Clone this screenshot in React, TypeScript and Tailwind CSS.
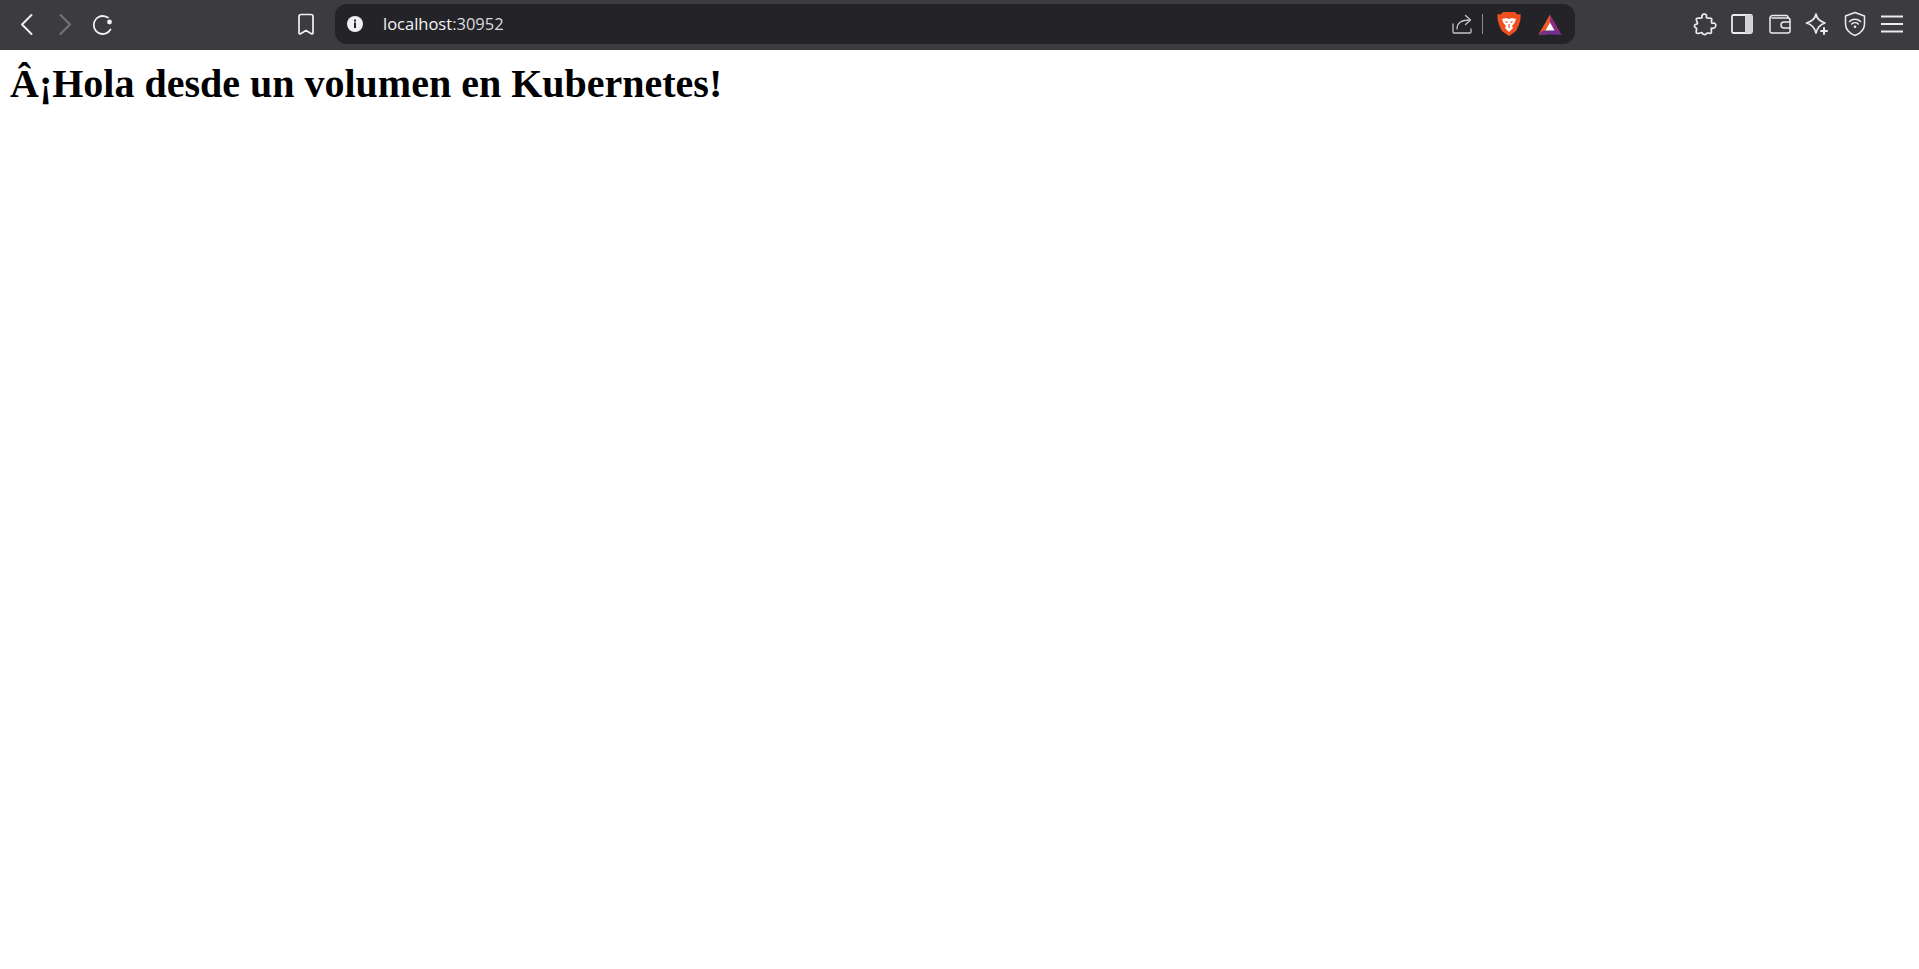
const stroke = { fill: 'none', stroke: 'currentColor', strokeLinecap: 'round', strokeLinejoin: 'round' } as const;

const ToolButton: React.FC<{ children: React.ReactNode; className?: string }> = ({ children, className }) => (
  <div className={`h-[48px] flex items-center justify-center shrink-0 ${className ?? 'w-[38px] text-[#f1f1f3]'}`}>{children}</div>
);

const BackIcon = () => (
  <svg width="24" height="24" viewBox="0 0 24 24" {...stroke} strokeWidth="2"><path d="M16.5 3 L7 12.5 L16.5 22" /></svg>
);
const ForwardIcon = () => (
  <svg width="24" height="24" viewBox="0 0 24 24" {...stroke} strokeWidth="2"><path d="M7.5 3 L17 12.5 L7.5 22" /></svg>
);
const ReloadIcon = () => (
  <svg width="24" height="24" viewBox="0 0 24 24" {...stroke} strokeWidth="1.8">
    <path d="M19.5 17.5 A9 9 0 1 1 14 4.3 L17 5.5" />
    <circle cx="18.5" cy="10" r="2.4" fill="currentColor" stroke="none" />
  </svg>
);
const BookmarkIcon = () => (
  <svg width="24" height="24" viewBox="0 0 24 24" {...stroke} strokeWidth="1.7">
    <path d="M5 4.5 A2 2 0 0 1 7 2.5 H17 A2 2 0 0 1 19 4.5 V21 A1 1 0 0 1 17.5 21.8 L12 18.5 L6.5 21.8 A1 1 0 0 1 5 21 Z" />
  </svg>
);
const InfoIcon = () => (
  <svg width="18" height="18" viewBox="0 0 18 18">
    <circle cx="9" cy="9" r="8" fill="#f0f0f2" />
    <rect x="8" y="7.5" width="2" height="5.5" fill="#242428" />
    <rect x="8" y="4.5" width="2" height="2" fill="#242428" />
  </svg>
);
const ShareIcon = () => (
  <svg width="20" height="20" viewBox="0 0 20 20" {...stroke} strokeWidth="1.3" className="text-[#c4c4c8]">
    <path d="M1 10 V18 A1 1 0 0 0 2 19 H18 A1 1 0 0 0 19 18 V15" />
    <path d="M5 15 C5 9 9 6 18 6" />
    <path d="M13.5 1.5 L18.5 6 L13.5 10.5" />
  </svg>
);
const BraveIcon = () => (
  <svg width="24" height="26" viewBox="0 0 24 26">
    <path d="M6 1 H18 L20.5 3.5 L23.5 3 V8 L22 14 L19 20 L12 25 L5 20 L2 14 L0.5 8 V3 L3.5 3.5 Z" fill="#f1501e" />
    <path d="M5 8 L9 7 L12 8 L15 7 L19 8 L17.5 12 L15 15 L16 17 L12 21 L8 17 L9 15 L6.5 12 Z" fill="#ffffff" />
    <path d="M8.5 10.5 L10.5 11.5 M15.5 10.5 L13.5 11.5 M12 13 V17" stroke="#f1501e" strokeWidth="1.2" fill="none" />
  </svg>
);
const BatIcon = () => (
  <svg width="24" height="21" viewBox="0 0 24 21">
    <path d="M12 0.5 L0.5 20.5 H8 L12 13 Z" fill="#ee5a2b" />
    <path d="M12 0.5 L23.5 20.5 H17 L12 11 Z" fill="#8a2b80" />
    <path d="M0.5 20.5 L5 16.5 H19 L23.5 20.5 Z" fill="#6e2f8f" />
    <path d="M12 8.5 L16.5 16.5 H7.5 Z" fill="#ffffff" />
  </svg>
);
const PuzzleIcon = () => (
  <svg width="24" height="24" viewBox="0 0 24 24" {...stroke} strokeWidth="1.7">
    <path d="M9 5 C8 2 13 1 13.5 3.5 C13.7 4.5 13 5 13.5 5.8 C14 6.5 18 5.8 18.5 6.5 C19.2 7.5 18 10 18.7 11 C19.5 11.8 21 10.5 22 11.5 C23.5 13 22.5 16.5 20 16.3 C19 16.2 18.7 15.8 18.3 16.3 C17.8 17 19 20 18.2 21 C17.2 22 14.5 20.5 13.8 21.2 C13 22 13 23 11 22.5 C9 22 9.5 20.5 8.5 20.7 C7 21 4.5 22 3.5 21 C2.5 20 4 17.5 3.5 16.5 C3 15.5 1 15.5 1.5 13.5 C2 11.5 4.5 12.5 4.5 11.5 C4.5 10 2.5 7.5 3.5 6.5 C4.5 5.5 9.5 7 9 5 Z" />
  </svg>
);
const PanelIcon = () => (
  <svg width="22" height="20" viewBox="0 0 22 20">
    <rect x="1" y="1" width="20" height="18" rx="1.5" fill="none" stroke="currentColor" strokeWidth="1.8" />
    <rect x="14" y="1" width="7" height="18" fill="#d2d2d6" />
  </svg>
);
const WalletIcon = () => (
  <svg width="22" height="22" viewBox="0 0 22 22" {...stroke} strokeWidth="1.5">
    <path d="M1 5 A2.5 2.5 0 0 1 3.5 2.5 H17 A2 2 0 0 1 19 4.5 V5" />
    <path d="M1 5 V18 A2 2 0 0 0 3 20 H19 A2 2 0 0 0 21 18 V7 A2 2 0 0 0 19 5 H3" />
    <path d="M21 9 H15 A2.5 2.5 0 0 0 15 15 H21" />
  </svg>
);
const SparkleIcon = () => (
  <svg width="24" height="24" viewBox="0 0 24 24" {...stroke} strokeWidth="1.7">
    <path d="M11 2 C12 7 15 9.5 20 11 C15 12.5 12.5 15 11 21 C9.5 15 7 12.5 1.5 11 C7 9.5 10 7 11 2 Z" />
    <path d="M19 16 V22 M16 19 H22" strokeWidth="2" />
  </svg>
);
const ShieldIcon = () => (
  <svg width="22" height="26" viewBox="0 0 22 26" {...stroke} strokeWidth="1.5">
    <path d="M11 1.5 L20.5 5 V13 C20.5 19 16 22.5 11 24.5 C6 22.5 1.5 19 1.5 13 V5 Z" />
    <path d="M5.5 10.5 C8.5 7.5 13.5 7.5 16.5 10.5" />
    <path d="M7.7 13 C9.5 11.3 12.5 11.3 14.3 13" />
    <circle cx="11" cy="15.8" r="1.3" fill="currentColor" stroke="none" />
  </svg>
);
const MenuIcon = () => (
  <svg width="22" height="18" viewBox="0 0 22 18" fill="none" stroke="currentColor" strokeWidth="1.8">
    <path d="M0 1.5 H22 M0 9 H22 M0 16.5 H22" />
  </svg>
);

export default function App() {
  return (
    <div className="min-h-screen bg-white">
      {/* Browser toolbar */}
      <div className="h-[50px] pb-[2px] bg-[#3b3b40] flex items-center pl-[8px] pr-[8px]">
        <ToolButton><BackIcon /></ToolButton>
        <ToolButton className="w-[38px] text-[#75757a]"><ForwardIcon /></ToolButton>
        <ToolButton><ReloadIcon /></ToolButton>
        <ToolButton className="w-[38px] text-[#f1f1f3] ml-[165px]"><BookmarkIcon /></ToolButton>

        {/* Address bar */}
        <div className="ml-[10px] mr-[111px] h-[40px] flex-1 rounded-[12px] bg-[#242428] flex items-center pl-[11px] pr-[13px]">
          <InfoIcon />
          <span className="ml-[19px] text-[16.5px] text-[#d9d9dc] font-['Open_Sans',sans-serif]">
            <span className="text-[#f4f4f6]">localhost</span>:30952
          </span>
          <div className="ml-auto flex items-center">
            <ShareIcon />
            <div className="ml-[10px] w-px h-[20px] bg-[#8b8b90]" />
            <div className="ml-[14px] flex"><BraveIcon /></div>
            <div className="ml-[17px] flex"><BatIcon /></div>
          </div>
        </div>

        <div className="flex items-center">
          <ToolButton className="w-[37.5px] text-[#ececee]"><PuzzleIcon /></ToolButton>
          <ToolButton className="w-[37.5px] text-[#ececee]"><PanelIcon /></ToolButton>
          <ToolButton className="w-[37.5px] text-[#ececee]"><WalletIcon /></ToolButton>
          <ToolButton className="w-[37.5px] text-[#ececee]"><SparkleIcon /></ToolButton>
          <ToolButton className="w-[37.5px] text-[#ececee]"><ShieldIcon /></ToolButton>
          <ToolButton className="w-[37.5px] text-[#ececee]"><MenuIcon /></ToolButton>
        </div>
      </div>

      {/* Page body */}
      <h1 className="pl-[10px] pt-[11px] text-[40px] leading-[46px] font-bold text-black font-['Liberation_Serif',serif]">
        Â¡Hola desde un volumen en Kubernetes!
      </h1>
    </div>
  );
}
